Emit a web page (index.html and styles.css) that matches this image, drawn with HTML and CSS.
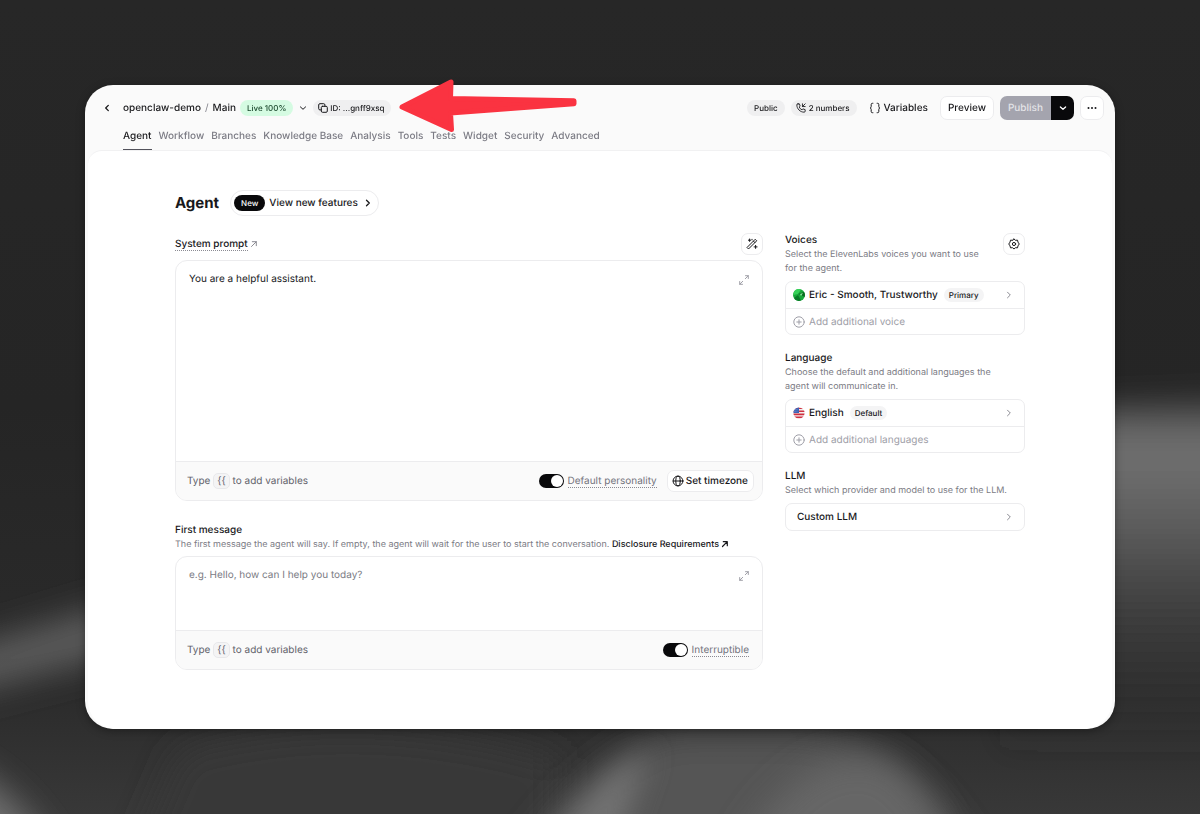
FILE: index.html
```html
<!DOCTYPE html>
<html lang="en">
<head>
<meta charset="utf-8">
<meta name="viewport" content="width=device-width, initial-scale=1">
<title>openclaw-demo – Agent</title>
<link rel="stylesheet" href="styles.css">
</head>
<body>
<svg class="backdrop" viewBox="0 0 1200 814" preserveAspectRatio="none" aria-hidden="true">
  <defs>
    <linearGradient id="base" x1="0" y1="0" x2="0" y2="1">
      <stop offset="0" stop-color="#272727"/><stop offset=".5" stop-color="#252525"/>
      <stop offset=".85" stop-color="#2b2b2b"/><stop offset="1" stop-color="#383838"/>
    </linearGradient>
    <linearGradient id="right" x1="0" y1="0" x2="0" y2="1">
      <stop offset="0" stop-color="#6e6e6e" stop-opacity="0"/><stop offset=".12" stop-color="#6a6a6a"/><stop offset=".2" stop-color="#6e6e6e"/>
      <stop offset=".32" stop-color="#626262"/><stop offset=".55" stop-color="#444"/>
      <stop offset="1" stop-color="#2c2c2c" stop-opacity="0"/>
    </linearGradient>
    <filter id="soft" x="-50%" y="-50%" width="200%" height="200%"><feGaussianBlur stdDeviation="17"/></filter>
    <filter id="soft2" x="-50%" y="-50%" width="200%" height="200%"><feGaussianBlur stdDeviation="14"/></filter>
  </defs>
  <rect width="1200" height="814" fill="url(#base)"/>
  <path d="M1000 408 L1300 388 V760 H1000Z" fill="url(#right)" filter="url(#soft2)"/>
  <path d="M-60 656 L120 602 V654 L-60 700Z" fill="#5c5c5c" filter="url(#soft)"/>
  <path d="M-90 745 Q20 770 70 890 H-90Z" fill="#707070" filter="url(#soft)"/>
  <path d="M180 750 Q360 700 560 760 V890 H120Z" fill="#383838" filter="url(#soft)"/>
  <path d="M500 890 Q570 770 670 732 H790 Q920 735 990 890Z" fill="#545454" filter="url(#soft)"/>
  <path d="M535 870 Q590 775 650 750 Q630 800 610 870Z" fill="#727272" filter="url(#soft2)"/>
  <path d="M720 890 Q790 740 880 760 Q940 790 960 890Z" fill="#666" filter="url(#soft)"/>
</svg>

<svg class="sprite" aria-hidden="true">
  <symbol id="chev-right" viewBox="0 0 12 12"><path d="M4.500 3.200 7.300 6 4.500 8.800"/></symbol>
  <symbol id="chev-left" viewBox="0 0 12 12"><path d="M7.300 3.400 4.700 6l2.600 2.600"/></symbol>
  <symbol id="chev-down" viewBox="0 0 12 12"><path d="M3.400 4.900 6 7.300l2.600-2.400"/></symbol>
  <symbol id="expand" viewBox="0 0 12 12"><path d="M7.300 4.700 10.300 1.700M7.500 1.700h2.800v2.800M4.700 7.300l-3 3M1.700 7.500v2.800h2.800"/></symbol>
  <symbol id="plus" viewBox="0 0 12 12"><circle cx="6" cy="6" r="5.200"/><path d="M6 3.800v4.400M3.800 6h4.400"/></symbol>
  <symbol id="arrow-ne" viewBox="0 0 8 8"><path d="M1.500 6.500 6.300 1.700M2.300 1.700h4v4"/></symbol>
</svg>

<div class="window">
  <header class="top">
    <div class="bar">
      <button class="plain back" aria-label="Back"><svg class="ico bold"><use href="#chev-left"/></svg></button>
      <nav class="crumbs" aria-label="Breadcrumb">
        <a href="#project">openclaw-demo</a><span class="slash">/</span><a href="#main">Main</a>
      </nav>
      <span class="pill live">Live 100%</span>
      <button class="plain branch" aria-label="Choose branch"><svg class="ico"><use href="#chev-down"/></svg></button>
      <button class="pill id"><svg class="ico small" viewBox="0 0 10 10"><rect x="3.300" y="3.300" width="6" height="6" rx="1.200"/><path d="M3.300 6.900H1.900A1.200 1.200 0 0 1 .7 5.700V1.900A1.200 1.200 0 0 1 1.900.7h3.800a1.200 1.200 0 0 1 1.200 1.200v1.400"/></svg>ID: ...gnff9xsq</button>
      <div class="actions">
        <span class="pill">Public</span>
        <button class="pill numbers"><svg class="ico small" viewBox="0 0 24 24"><path d="M15.500 2v6.500H22M22 2l-6.500 6.500M5 2h3l2 5.500-2.500 2a13 13 0 0 0 7 7l2-2.500L22 16v3.500A2.500 2.500 0 0 1 19.500 22C10 22 2 14 2 4.500A2.500 2.500 0 0 1 5 2Z" stroke-width="2.100"/></svg>2 numbers</button>
        <button class="plain vars"><svg class="ico" viewBox="0 0 12 12"><path d="M3.900 1.300h-.5C2.600 1.300 2.200 1.700 2.200 2.500v1.900C2.200 5.400 1.800 6 1 6c.8 0 1.200.6 1.200 1.600v1.900c0 .8.4 1.200 1.200 1.200h.5M8.100 1.300h.5c.8 0 1.200.4 1.200 1.200v1.900c0 1 .4 1.600 1.200 1.600-.8 0-1.200.6-1.200 1.600v1.900c0 .8-.4 1.200-1.200 1.200h-.5"/></svg>Variables</button>
        <button class="btn preview">Preview</button>
        <div class="split">
          <button class="publish" disabled>Publish</button><button class="more" aria-label="Publish options"><svg class="ico bold"><use href="#chev-down"/></svg></button>
        </div>
        <button class="btn dots" aria-label="More"><svg class="ico solid" viewBox="0 0 12 12"><circle cx="2.500" cy="6" r="1"/><circle cx="6" cy="6" r="1"/><circle cx="9.500" cy="6" r="1"/></svg></button>
      </div>
    </div>
    <nav class="tabs" aria-label="Sections">
      <a class="on" href="#agent">Agent</a><a href="#workflow">Workflow</a><a href="#branches">Branches</a><a href="#kb">Knowledge Base</a><a href="#analysis">Analysis</a><a href="#tools">Tools</a><a href="#tests">Tests</a><a href="#widget">Widget</a><a href="#security">Security</a><a href="#advanced">Advanced</a>
    </nav>
    <svg class="pointer" viewBox="0 0 178 54" aria-hidden="true"><path d="M3 28 52 3 51.500 19.500 175 21.700V24.700L51.500 34 52.500 50.500Z"/></svg>
  </header>

  <main class="panel">
    <div class="content">
      <div class="heading">
        <h1>Agent</h1>
        <a class="features" href="#new"><span class="new">New</span>View new features<svg class="ico bold"><use href="#chev-right"/></svg></a>
      </div>
      <div class="columns">
        <div class="left">
          <section>
            <div class="label-row">
              <label class="title dotted" for="prompt">System prompt</label><svg class="ico ne muted"><use href="#arrow-ne"/></svg>
              <button class="btn square push" aria-label="Generate prompt"><svg class="ico" viewBox="0 0 12 12"><path d="M1.300 9.200 9.200 1.300l1.500 1.500-7.900 7.900ZM7.400 3.100l1.500 1.500M3.600 1v2.400M2.400 2.200h2.400M9.600 7.400v3M8.100 8.900h3M6 1.300v.4"/></svg></button>
            </div>
            <div class="editor">
              <textarea id="prompt" class="tall" spellcheck="false">You are a helpful assistant.</textarea>
              <button class="plain expand" aria-label="Expand system prompt"><svg class="ico"><use href="#expand"/></svg></button>
              <div class="foot">
                <span class="hint">Type <kbd>{{</kbd> to add variables</span>
                <label class="toggle"><input type="checkbox" role="switch" checked><span class="dotted">Default personality</span></label>
                <button class="btn zone"><svg class="ico" viewBox="0 0 12 12"><circle cx="6" cy="6" r="4.900"/><ellipse cx="6" cy="6" rx="2.200" ry="4.900"/><path d="M1.100 6h9.800"/></svg>Set timezone</button>
              </div>
            </div>
          </section>
          <section class="first">
            <label class="title" for="first">First message</label>
            <p class="desc">The first message the agent will say. If empty, the agent will wait for the user to start the conversation. <a href="#disclosure">Disclosure Requirements<svg class="ico ne"><use href="#arrow-ne"/></svg></a></p>
            <div class="editor">
              <textarea id="first" class="short" placeholder="e.g. Hello, how can I help you today?"></textarea>
              <button class="plain expand" aria-label="Expand first message"><svg class="ico"><use href="#expand"/></svg></button>
              <div class="foot">
                <span class="hint">Type <kbd>{{</kbd> to add variables</span>
                <label class="toggle last"><input type="checkbox" role="switch" checked><span class="dotted">Interruptible</span></label>
              </div>
            </div>
          </section>
        </div>
        <aside class="right">
          <section>
            <div class="intro">
              <div><h2 class="title">Voices</h2><p class="desc">Select the ElevenLabs voices you want to use for the agent.</p></div>
              <button class="btn square" aria-label="Voice settings"><svg class="ico" viewBox="0 0 24 24"><path d="m12 2 3 2.600 4-.3 1 4L22.500 12 20 15.700l-1 4-4-.3L12 22l-3-2.600-4 .3-1-4L1.500 12 4 8.300l1-4 4 .3Z" stroke-width="2"/><circle cx="12" cy="12" r="3.200" stroke-width="2"/></svg></button>
            </div>
            <div class="list">
              <button class="row"><svg class="pic" viewBox="0 0 12 12"><circle cx="6" cy="6" r="6" fill="#18a83a"/><path d="M1 2.700A6 6 0 0 1 8 .4L5 5 .3 6Z" fill="#36d158"/><path d="M5 5l6-2a6 6 0 0 1 .6 5L8 6Z" fill="#0b6a22"/><path d="M1 9l4-3 3 5.600A6 6 0 0 1 1 9Z" fill="#087b28"/><path d="M7 5l3-1-2 3Z" fill="#8df09d"/></svg>Eric - Smooth, Trustworthy<span class="pill tag">Primary</span><svg class="ico go"><use href="#chev-right"/></svg></button>
              <button class="row add"><svg class="ico"><use href="#plus"/></svg>Add additional voice</button>
            </div>
          </section>
          <section>
            <h2 class="title">Language</h2>
            <p class="desc">Choose the default and additional languages the agent will communicate in.</p>
            <div class="list">
              <button class="row"><svg class="pic" viewBox="0 0 12 12"><clipPath id="round"><circle cx="6" cy="6" r="5.600"/></clipPath><g clip-path="url(#round)"><path fill="#f3eeee" d="M0 0h12v12H0z"/><path d="M0 1.300h12M0 4.300h12M0 7.400h12M0 10.400h12" stroke="#d03040" stroke-width="1.600"/><path fill="#3f62b5" d="M0 0h6v6H0z"/><path d="M1 2.500h4M1 4.300h4" stroke="#a9bbe5" stroke-width=".5" stroke-dasharray=".6 .7"/></g></svg>English<span class="pill tag">Default</span><svg class="ico go"><use href="#chev-right"/></svg></button>
              <button class="row add"><svg class="ico"><use href="#plus"/></svg>Add additional languages</button>
            </div>
          </section>
          <section>
            <h2 class="title">LLM</h2>
            <p class="desc">Select which provider and model to use for the LLM.</p>
            <div class="list"><button class="row">Custom LLM<svg class="ico go"><use href="#chev-right"/></svg></button></div>
          </section>
        </aside>
      </div>
    </div>
  </main>
</div>
</body>
</html>
```
FILE: styles.css
```css
* { box-sizing: border-box; }
body {
  margin: 0;
  min-height: 100vh;
  padding: 85px;
  display: flex;
  background: #272727;
  color: #18181b;
  font: 400 10px/14px Inter, "Liberation Sans", sans-serif;
  text-rendering: geometricPrecision;
}
button, textarea, input { font: inherit; color: inherit; margin: 0; text-rendering: inherit; }
button { border: 0; padding: 0; background: none; display: inline-flex; align-items: center; font-weight: 500; white-space: nowrap; }
a { color: inherit; text-decoration: none; }
h1, h2, p { margin: 0; }

.backdrop { position: fixed; inset: 0; width: 100%; height: 100%; z-index: -1; }
.sprite { display: none; }
.ico { width: 12px; height: 12px; flex: none; fill: none; stroke: currentColor; stroke-width: 1; stroke-linecap: round; stroke-linejoin: round; }
.ico.small { width: 10px; height: 10px; }
.ico.solid { fill: currentColor; stroke: none; }
.ico.ne { width: 8px; height: 8px; }
.ico.bold { stroke-width: 1.3; }
.muted { color: #8b8b93; }

.window {
  flex: 1;
  min-width: 0;
  display: flex;
  flex-direction: column;
  border-radius: 28px;
  background: #fafafa;
  box-shadow: 0 2px 8px rgba(0, 0, 0, .35);
}
.top { position: relative; padding: 11px 11px 0 16px; }
.bar { display: flex; align-items: center; height: 24px; }
.back { margin-right: 10px; }
.crumbs { display: flex; gap: 4px; font-weight: 500; }
.slash { color: #85858d; font-weight: 400; }
.pill {
  display: inline-flex;
  align-items: center;
  gap: 4px;
  height: 16px;
  padding: 0 7px;
  border-radius: 8px;
  background: #efeff0;
  font-size: 8px;
  font-weight: 500;
  white-space: nowrap;
}
.live { margin-left: 4px; background: #d5fbe2; color: #1c4a2e; }
.branch { margin: 0 4px; }
.id { padding: 0 7px 0 5px; gap: 2px; }
.actions { display: flex; align-items: center; margin-left: auto; gap: 6px; }
.numbers { padding: 0 7px 0 5px; gap: 3px; }
.vars { gap: 3px; margin: 0 6px; }
.btn { justify-content: center; height: 24px; border: 1px solid #ececee; border-radius: 7px; background: #fff; }
.preview { padding: 0 7px; }
.split { display: flex; height: 24px; border-radius: 7px; overflow: hidden; }
.publish { padding: 0 8px; background: #a4a4ae; color: #e3e3e7; }
.more { width: 23px; justify-content: center; background: #09090b; color: #fff; }
.dots { width: 24px; }

.tabs { display: flex; gap: 7px; height: 30px; padding-left: 22px; font-weight: 500; color: #7b7b84; white-space: nowrap; }
.tabs a { padding-top: 9px; }
.tabs .on { color: #18181b; border-bottom: 1px solid #52525b; }
.pointer { position: absolute; left: 314px; top: -6px; width: 178px; height: 54px; fill: #fa3341; stroke: #fa3341; stroke-width: 5px; stroke-linejoin: round; overflow: visible; }

.panel { flex: 1; margin: 0 3px; padding: 39px 24px 59px; background: #fff; border-top: 1px solid #f1f1f2; border-radius: 14px 14px 28px 28px; }
.content { max-width: 850px; margin: 0 auto; }
.heading { display: flex; align-items: center; gap: 11px; margin-bottom: 17px; }
h1 { font-size: 15px; line-height: 20px; font-weight: 700; }
.features { display: flex; align-items: center; height: 26px; gap: 4px; padding: 0 4px 0 3px; border: 1px solid #ececee; border-radius: 13px; font-weight: 500; }
.new { padding: 1px 7px; border-radius: 8px; background: #09090b; color: #fff; font-size: 8px; }
.columns { display: grid; grid-template-columns: minmax(0, 1fr) 240px; gap: 22px; }
.title { display: block; font-size: 10px; line-height: 14px; font-weight: 500; }
.desc { font-size: 9px; line-height: 14px; color: #7b7b84; }
.desc a { color: #18181b; font-weight: 500; }
.desc .ne { margin-left: 2px; stroke-width: 1.2; vertical-align: -1px; }
.dotted { border-bottom: 1px dotted #8b8b93; line-height: 12px; }
.label-row { display: flex; align-items: center; gap: 2px; margin-bottom: 5px; }
.square { width: 22px; height: 22px; flex: none; }
.push { margin-left: auto; }
.editor { position: relative; display: flex; flex-direction: column; border: 1px solid #ececee; border-radius: 12px; overflow: hidden; background: #fff; }
textarea { display: block; width: 100%; border: 0; outline: 0; resize: none; padding: 11px 40px 10px 13px; background: none; }
textarea::placeholder { color: #7b7b84; opacity: 1; }
.tall { height: 200px; }
.short { height: 73px; }
.expand { position: absolute; right: 12px; top: 13px; color: #a0a0a8; }
.foot { display: flex; align-items: center; gap: 10px; height: 39px; padding: 0 8px 0 11px; border-top: 1px solid #ececee; background: #fafafa; color: #62626b; }
.hint { margin-right: auto; }
kbd { display: inline-block; padding: 0 3px; border: 1px solid #e8e8ea; border-radius: 5px; background: #f4f4f5; font: inherit; }
.toggle { display: flex; align-items: center; gap: 4px; color: #74747d; }
.toggle .dotted { padding-top: 1px; }
.toggle.last { margin-right: 5px; }
.toggle input { appearance: none; width: 25px; height: 14px; padding: 1px; border-radius: 7px; background: #09090b; display: flex; justify-content: flex-end; }
.toggle input::before { content: ""; width: 12px; height: 12px; border-radius: 50%; background: #fff; }
.toggle input:not(:checked) { justify-content: flex-start; background: #a4a4ae; }
.zone { height: 22px; padding: 0 5px 0 4px; gap: 2px; color: #18181b; }
.first { margin-top: 22px; }
.first .title, .right .title { margin-bottom: 1px; }
.first .editor { margin-top: 4px; }
.list { margin-top: 5px; }
.right { display: flex; flex-direction: column; gap: 16px; }
.right .desc { padding-right: 12px; }
.intro { display: flex; justify-content: space-between; }
.list { border: 1px solid #ececee; border-radius: 7px; overflow: hidden; background: #fff; }
.row { display: flex; width: 100%; height: 26px; gap: 4px; padding: 0 9px 0 7px; }
.row + .row { border-top: 1px solid #ececee; }
.row:only-child { padding-left: 11px; }
.pic { width: 12px; height: 12px; flex: none; }
.tag { height: 14px; margin-left: 2px; padding: 0 5px; background: #f4f4f5; }
.go { margin-left: auto; color: #8b8b93; }
.add { color: #9e9ea7; font-weight: 400; }
```
